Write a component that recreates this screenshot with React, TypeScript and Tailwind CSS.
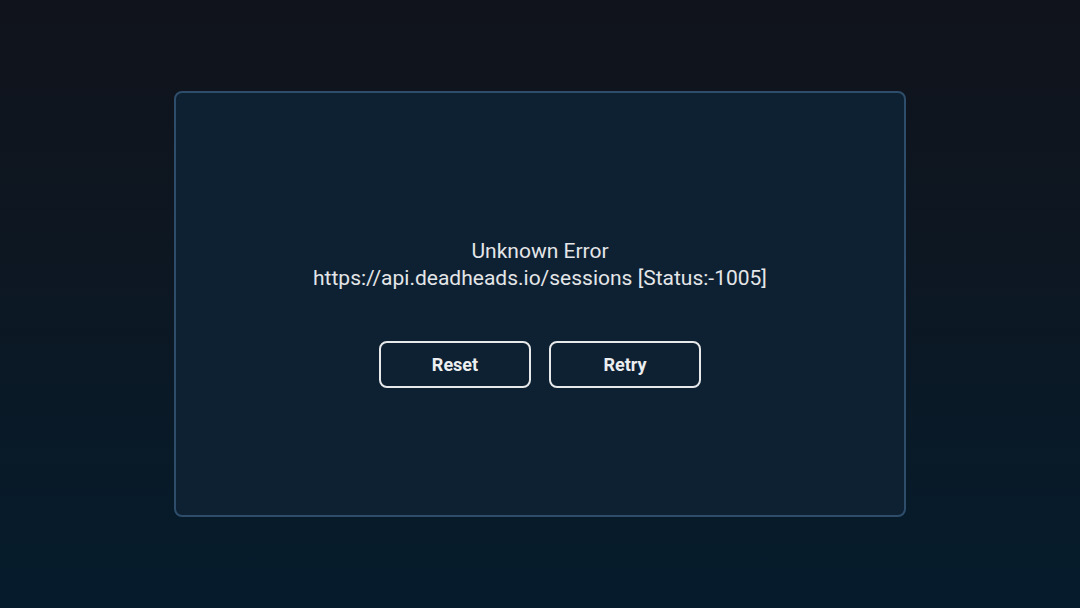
export default function App() {
  return (
    <div
      className="w-[1080px] h-[608px] flex items-center justify-center bg-gradient-to-b from-[#10131b] to-[#051c2c]"
      style={{ fontFamily: 'Roboto, "Liberation Sans", sans-serif' }}
    >
      <div className="w-[732px] h-[426px] rounded-lg border-2 border-[#2e4d6a] bg-[#0e2133] flex flex-col items-center justify-center pt-[18px]">
        <div className="text-center text-[21px] leading-[27px] text-[#e4e6e8]">
          <p>Unknown Error</p>
          <p>https://api.deadheads.io/sessions [Status:-1005]</p>
        </div>
        <div className="mt-[49px] flex gap-[18px]">
          <button className="w-[152px] h-[47px] rounded-lg border-2 border-[#e6e8ea] text-[18px] font-bold text-[#eceef0]">
            Reset
          </button>
          <button className="w-[152px] h-[47px] rounded-lg border-2 border-[#e6e8ea] text-[18px] font-bold text-[#eceef0]">
            Retry
          </button>
        </div>
      </div>
    </div>
  );
}
